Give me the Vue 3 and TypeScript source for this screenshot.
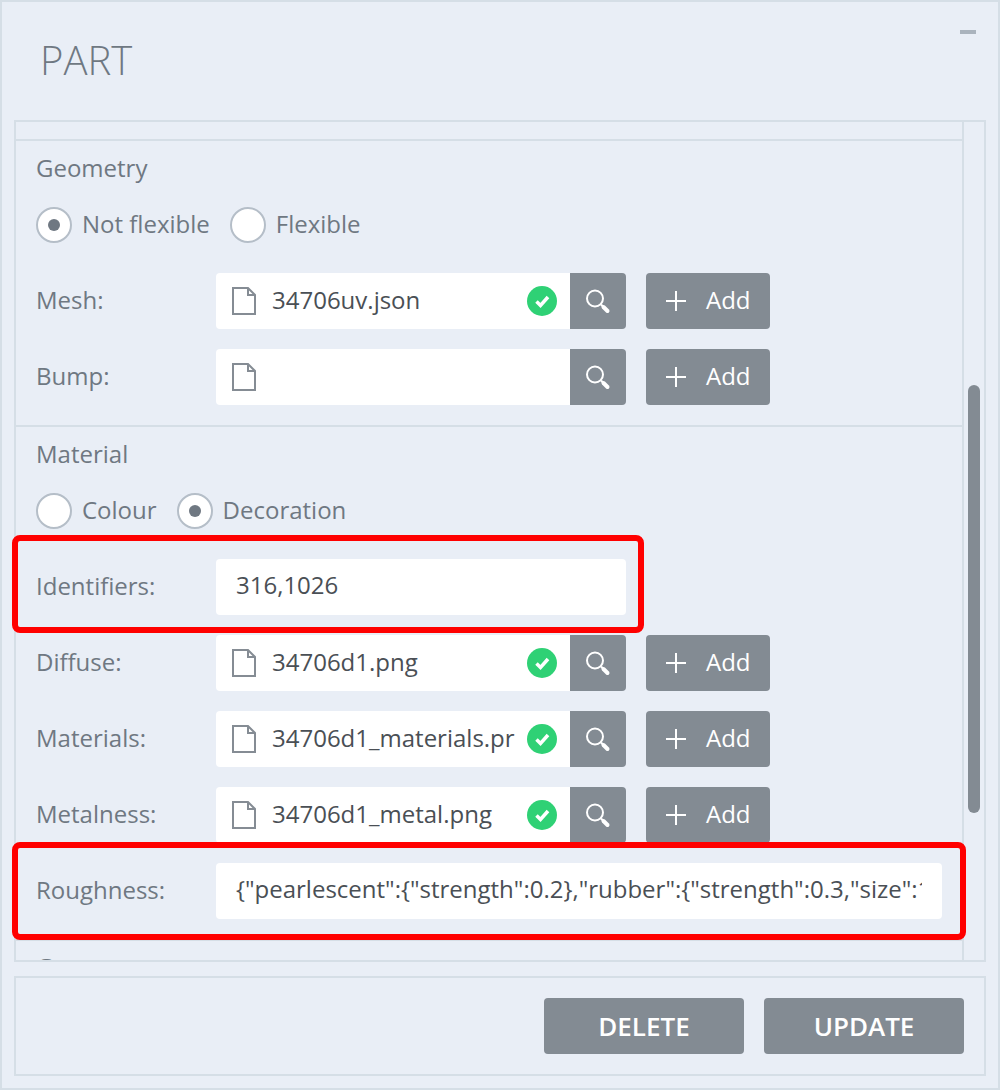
<script setup lang="ts">
interface FileRow { label: string; file: string; ok: boolean }
const geometry: FileRow[] = [
  { label: 'Mesh:', file: '34706uv.json', ok: true },
  { label: 'Bump:', file: '', ok: false },
]
const material: FileRow[] = [
  { label: 'Diffuse:', file: '34706d1.png', ok: true },
  { label: 'Materials:', file: '34706d1_materials.properties', ok: true },
  { label: 'Metalness:', file: '34706d1_metal.png', ok: true },
]
const roughness = '{"pearlescent":{"strength":0.2},"rubber":{"strength":0.3,"size":1,"scale":2}}'
</script>

<template>
  <div class="panel">
    <header class="head">
      <h1>PART</h1>
      <span class="minimize"></span>
    </header>

    <div class="scrollbox">
      <div class="content">
        <section class="section">
          <div class="title">Geometry</div>
          <div class="radios">
            <label class="radio"><i class="dot on"></i><span class="t">Not flexible</span></label>
            <label class="radio"><i class="dot"></i><span class="t">Flexible</span></label>
          </div>
          <div v-for="r in geometry" :key="r.label" class="row">
            <span class="label">{{ r.label }}</span>
            <div class="file">
              <svg class="doc" width="26" height="30" viewBox="0 0 26 30" fill="none" stroke="#858c94" stroke-width="2">
                <path d="M2 2h15l7 7v19H2z" />
                <path d="M17 2v7h7" />
              </svg>
              <span class="name">{{ r.file }}</span>
              <svg v-if="r.ok" class="check" width="30" height="30" viewBox="0 0 30 30">
                <circle cx="15" cy="15" r="15" fill="#2fd175" />
                <path d="M9.5 15.500l4 4 7.500-8.500" fill="none" stroke="#fff" stroke-width="3.500" />
              </svg>
            </div>
            <button class="search">
              <svg width="28" height="28" viewBox="0 0 28 28" fill="none" stroke="#fff">
                <circle cx="11" cy="11.500" r="8" stroke-width="2" />
                <path d="M17 17.500l2 2" stroke-width="2" />
                <path d="M19.500 20l4 4" stroke-width="4" stroke-linecap="round" />
              </svg>
            </button>
            <button class="add">
              <svg width="20" height="20" viewBox="0 0 20 20" stroke="#fff" stroke-width="2"><path d="M10 0v20M0 10h20" /></svg>
              <span class="t">Add</span>
            </button>
          </div>
        </section>

        <section class="section">
          <div class="title">Material</div>
          <div class="radios">
            <label class="radio"><i class="dot"></i><span class="t">Colour</span></label>
            <label class="radio"><i class="dot on"></i><span class="t">Decoration</span></label>
          </div>
          <div class="row">
            <span class="label">Identifiers:</span>
            <div class="text short"><span class="clip">316,1026</span></div>
          </div>
          <div v-for="r in material" :key="r.label" class="row">
            <span class="label">{{ r.label }}</span>
            <div class="file">
              <svg class="doc" width="26" height="30" viewBox="0 0 26 30" fill="none" stroke="#858c94" stroke-width="2">
                <path d="M2 2h15l7 7v19H2z" />
                <path d="M17 2v7h7" />
              </svg>
              <span class="name">{{ r.file }}</span>
              <svg v-if="r.ok" class="check" width="30" height="30" viewBox="0 0 30 30">
                <circle cx="15" cy="15" r="15" fill="#2fd175" />
                <path d="M9.5 15.500l4 4 7.500-8.500" fill="none" stroke="#fff" stroke-width="3.500" />
              </svg>
            </div>
            <button class="search">
              <svg width="28" height="28" viewBox="0 0 28 28" fill="none" stroke="#fff">
                <circle cx="11" cy="11.500" r="8" stroke-width="2" />
                <path d="M17 17.500l2 2" stroke-width="2" />
                <path d="M19.500 20l4 4" stroke-width="4" stroke-linecap="round" />
              </svg>
            </button>
            <button class="add">
              <svg width="20" height="20" viewBox="0 0 20 20" stroke="#fff" stroke-width="2"><path d="M10 0v20M0 10h20" /></svg>
              <span class="t">Add</span>
            </button>
          </div>
          <div class="row">
            <span class="label">Roughness:</span>
            <div class="text long"><span class="clip">{{ roughness }}</span></div>
          </div>
        </section>

        <section class="section last">
          <div class="title">Group</div>
        </section>
      </div>
      <div class="track"><div class="thumb"></div></div>
    </div>

    <footer class="foot">
      <button class="action">DELETE</button>
      <button class="action">UPDATE</button>
    </footer>

    <div class="mark mark-a"></div>
    <div class="mark mark-b"></div>
  </div>
</template>

<style>
html, body { margin: 0; background: #e9eef6; }
</style>

<style scoped>
.panel {
  position: relative;
  box-sizing: border-box;
  width: 1000px;
  height: 1090px;
  border: 2px solid #d5dee6;
  background: #e9eef6;
  padding: 0 12px;
  font-family: "Open Sans", "Noto Sans", sans-serif;
  color: #6f7882;
  font-size: 24px;
}
.head { position: relative; height: 118px; }
.head h1 {
  margin: 0;
  padding: 30px 0 0 26px;
  font-size: 40px;
  font-weight: 300;
  line-height: 56px;
  color: #6f7882;
}
.minimize {
  position: absolute;
  right: 10px;
  top: 28px;
  width: 16px;
  height: 4px;
  background: #aab3bd;
}
.scrollbox {
  box-sizing: border-box;
  display: flex;
  height: 842px;
  border: 2px solid #d5dee6;
  overflow: hidden;
}
.content {
  box-sizing: border-box;
  width: 948px;
  height: 838px;
  flex: none;
  padding-top: 17px;
  border-right: 2px solid #d5dee6;
  overflow: hidden;
}
.section { border-top: 2px solid #d5dee6; padding: 12px 20px 20px; }
.section.last { padding-top: 11px; }
.title { height: 32px; line-height: 30px; }
.radios { display: flex; gap: 20px; margin: 22px 0 30px; height: 36px; }
.radio { display: flex; align-items: center; gap: 10px; }
.t { position: relative; top: -2px; }
.dot {
  box-sizing: border-box;
  position: relative;
  width: 36px;
  height: 36px;
  border: 2px solid #b5bec8;
  border-radius: 50%;
  background: #fff;
}
.dot.on::after {
  content: "";
  position: absolute;
  left: 10px;
  top: 10px;
  width: 12px;
  height: 12px;
  border-radius: 50%;
  background: #6f7882;
}
.row { display: flex; align-items: center; height: 56px; margin-bottom: 20px; }
.row:last-child { margin-bottom: 0; }
.label { width: 180px; flex: none; padding-bottom: 4px; }
.file {
  box-sizing: border-box;
  display: flex;
  align-items: center;
  width: 354px;
  height: 56px;
  padding: 0 13px 0 15px;
  background: #fff;
  border-radius: 4px 0 0 4px;
  color: #4a4f55;
}
.doc { flex: none; margin-right: 15px; }
.name { flex: 1; min-width: 0; overflow: hidden; white-space: nowrap; padding-bottom: 4px; }
.check { flex: none; margin-left: 12px; }
.text {
  box-sizing: border-box;
  height: 56px;
  line-height: 52px;
  padding: 0 20px;
  background: #fff;
  border-radius: 4px;
  color: #4a4f55;
}
.clip { display: block; overflow: hidden; white-space: nowrap; }
.short { width: 410px; }
.long { width: 726px; }
button {
  border: 0;
  padding: 0;
  font: inherit;
  color: #fff;
  background: #838b93;
}
.search {
  display: flex;
  align-items: center;
  justify-content: center;
  width: 56px;
  height: 56px;
  border-radius: 0 4px 4px 0;
}
.add {
  display: flex;
  align-items: center;
  width: 124px;
  height: 56px;
  margin-left: 20px;
  padding-left: 20px;
  border-radius: 4px;
}
.add span { margin-left: 20px; }
.track { flex: 1; padding: 3px 4px; }
.thumb {
  width: 12px;
  height: 428px;
  margin-top: 260px;
  border-radius: 6px;
  background: #838b93;
}
.foot {
  box-sizing: border-box;
  display: flex;
  justify-content: flex-end;
  gap: 20px;
  height: 100px;
  margin-top: 14px;
  padding: 20px;
  border: 2px solid #d5dee6;
}
.action {
  width: 200px;
  height: 56px;
  border-radius: 4px;
  font-size: 26px;
  font-weight: 600;
  padding-bottom: 1px;
}
.mark {
  position: absolute;
  box-sizing: border-box;
  border: 6px solid #ff0000;
  border-radius: 8px;
  pointer-events: none;
}
.mark-a { left: 10px; top: 533px; width: 632px; height: 98px; }
.mark-b { left: 10px; top: 840px; width: 954px; height: 98px; }
</style>
